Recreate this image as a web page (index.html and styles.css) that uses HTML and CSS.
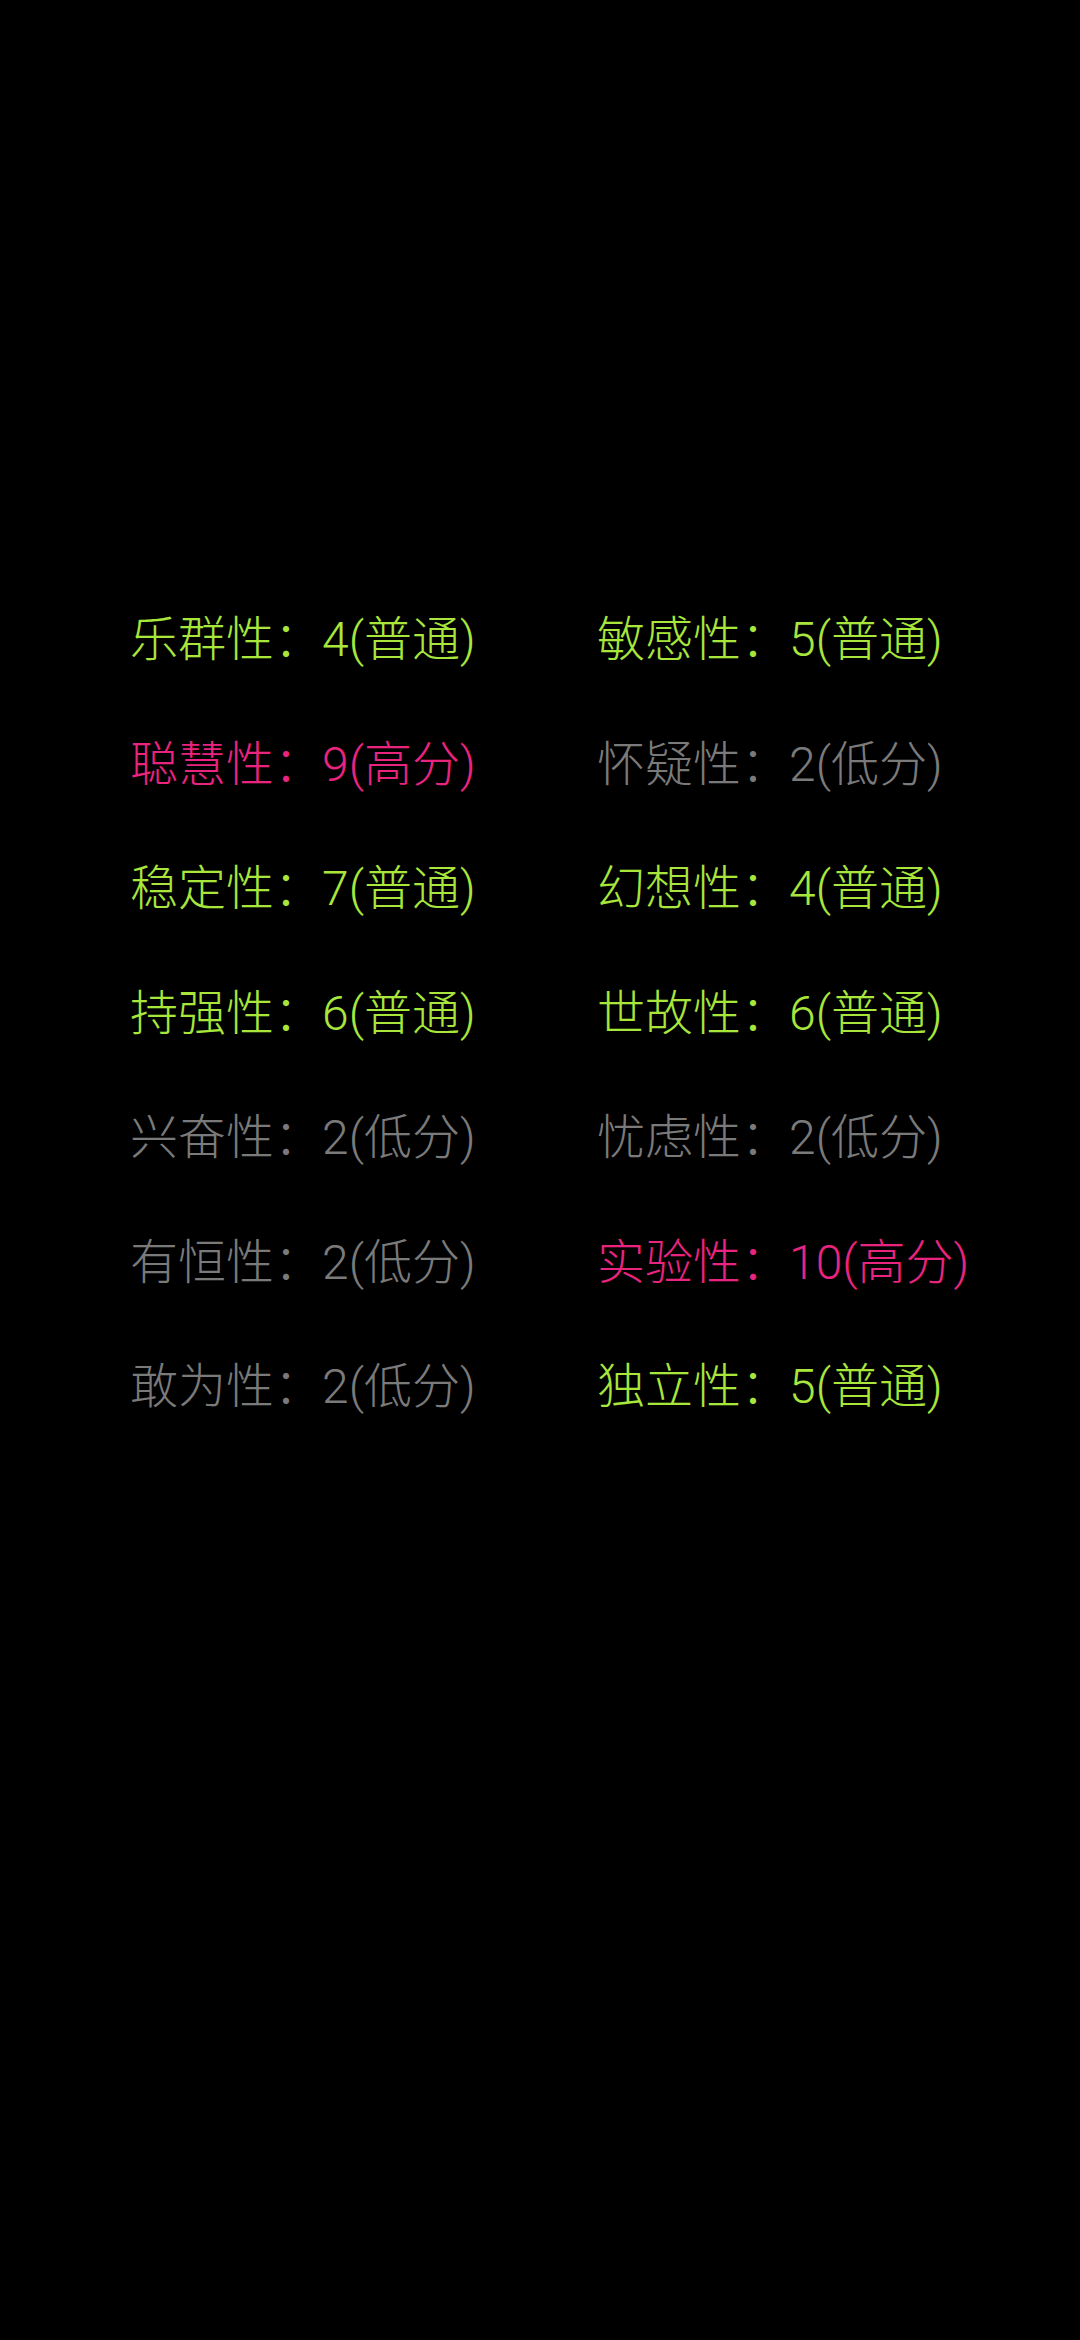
FILE: index.html
```html
<!DOCTYPE html>
<html lang="zh-CN">
<head>
  <meta charset="UTF-8">
  <meta name="viewport" content="width=device-width, initial-scale=1">
  <title>性格因素</title>
  <link rel="stylesheet" href="styles.css">
</head>
<body>
  <div class="traits">
    <div class="trait mid">乐群性：4(普通)</div>
    <div class="trait mid">敏感性：5(普通)</div>
    <div class="trait high">聪慧性：9(高分)</div>
    <div class="trait low">怀疑性：2(低分)</div>
    <div class="trait mid">稳定性：7(普通)</div>
    <div class="trait mid">幻想性：4(普通)</div>
    <div class="trait mid">持强性：6(普通)</div>
    <div class="trait mid">世故性：6(普通)</div>
    <div class="trait low">兴奋性：2(低分)</div>
    <div class="trait low">忧虑性：2(低分)</div>
    <div class="trait low">有恒性：2(低分)</div>
    <div class="trait high">实验性：10(高分)</div>
    <div class="trait low">敢为性：2(低分)</div>
    <div class="trait mid">独立性：5(普通)</div>
  </div>
</body>
</html>
```
FILE: styles.css
```css
body {
  margin: 0;
  background: #000;
  font-family: Roboto, "Noto Sans CJK SC", sans-serif;
  width: 1080px;
  height: 2340px;
}
.traits {
  display: grid;
  grid-template-columns: 467px 1fr;
  padding: 578px 0 0 130px;
}
.trait {
  font-size: 48px;
  font-weight: 300;
  line-height: 124.5px;
  white-space: nowrap;
}
.mid { color: #a8e63c; }
.high { color: #e8247f; }
.low { color: #7a7a7a; }
```
